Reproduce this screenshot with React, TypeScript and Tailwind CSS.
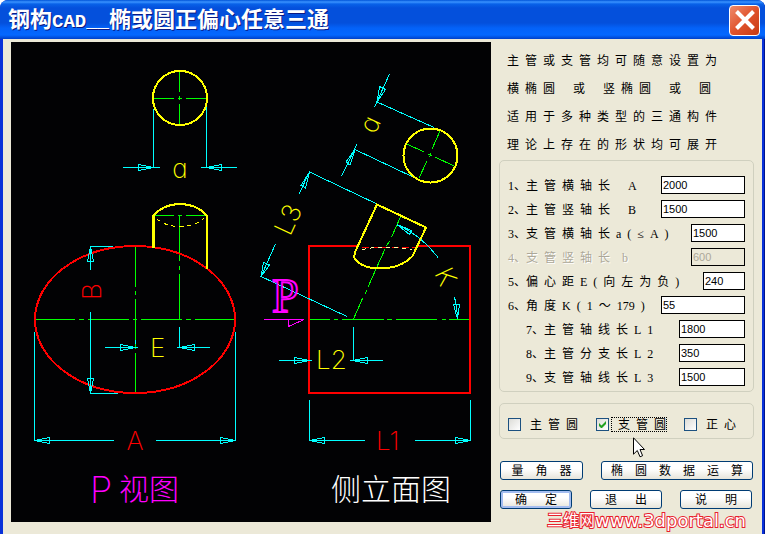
import React, { useState } from "react";

const cjk = "font-['Liberation_Serif','Noto_Sans_CJK_SC',serif]";
const cad = "font-['Inter','Noto_Sans_CJK_SC',sans-serif] font-extralight";

// Dialog labels are set wide: every blank is half an em.
const wide = (text: string) => text.replaceAll(" ", "\u2002");

type Field = {
  id: string;
  label: string;
  value: string;
  width: string;
  indent?: boolean;
  disabled?: boolean;
};

const fields: Field[] = [
  { id: "mainH", label: "1、主 管 横 轴 长   A", value: "2000", width: "w-[84px]" },
  { id: "mainV", label: "2、主 管 竖 轴 长   B", value: "1500", width: "w-[84px]" },
  { id: "branchH", label: "3、支 管 横 轴 长 a ( ≤ A )", value: "1500", width: "w-[54px]" },
  { id: "branchV", label: "4、支 管 竖 轴 长  b", value: "600", width: "w-[54px]", disabled: true },
  { id: "offset", label: "5、偏 心 距 E ( 向 左 为 负 )", value: "240", width: "w-[42px]" },
  { id: "angle", label: "6、角 度 K ( 1 ～ 179 )", value: "55", width: "w-[84px]" },
  { id: "l1", label: "7、主 管 轴 线 长 L 1", value: "1800", width: "w-[66px]", indent: true },
  { id: "l2", label: "8、主 管 分 支 长 L 2", value: "350", width: "w-[66px]", indent: true },
  { id: "l3", label: "9、支 管 轴 线 长 L 3", value: "1500", width: "w-[66px]", indent: true },
];

const notes = [
  "主 管 或 支 管 均 可 随 意 设 置 为",
  "横 椭 圆   或   竖 椭 圆   或   圆",
  "适 用 于 多 种 类 型 的 三 通 构 件",
  "理 论 上 存 在 的 形 状 均 可 展 开",
];

function Drawing() {
  return (
    <svg
      viewBox="11 42 480 480"
      className="h-[480px] w-[480px] shrink-0 bg-[#020204]"
      fill="none"
      shapeRendering="crispEdges"
      role="img"
      aria-label="三通视图"
    >
      {/* centre lines */}
      <g stroke="#00ff00">
        <path d="M154 98.5H174M178 98.5H182M186 98.5H206M179.5 71V92M179.5 96V100M179.5 104V124" />
        <path d="M154 215.5H174M178 215.5H182M186 215.5H206M179.5 216V261M179.5 266V270M179.5 274V319" />
        <path d="M135.5 247V287M135.5 291V295M135.5 299V349M135.5 353V392" />
        <path d="M36 319.5H75M79 319.5H84M88 319.5H129M133 319.5H137M141 319.5H182M186 319.5H191M195 319.5H234" />
        <path d="M310 319.5H330M334 319.5H338M342 319.5H384M387 319.5H392M396 319.5H437M442 319.5H446M449 319.5H469" />
        <path d="M440 131L432 149M431 153L429.5 157M427 161L419 178" />
        <path d="M407 144L424 152M428 154L432 156M435 157L454 166" />
        <path d="M400.5 217L391.5 237M389.5 241L386.5 246M385 249L368 287M366.5 290.5L365 294M362.5 298.5L353.5 319" />
      </g>

      {/* main pipe */}
      <g stroke="#ff0000" strokeWidth="2">
        <ellipse cx="135" cy="319.5" rx="100" ry="73.5" />
        <path d="M359 246H309V393H470V246H418" />
        <path d="M362 247.5H416" strokeWidth="1" strokeDasharray="7 3" />
      </g>

      {/* dimension lines */}
      <g stroke="#00ffff">
        <path d="M153.5 109V167.5M206.5 104V167.5M123 167.5H160M201 167.5H237" />
        <path d="M153 167.5L138.5 164.5V170.5ZM207 167.5L221.5 164.5V170.5Z" />
        <path d="M113 246.5H90.5V270M90.5 312V393.5H118" />
        <path d="M90.5 247L87.5 261.5H93.5ZM90.5 393L87.5 378.5H93.5Z" />
        <path d="M34.5 332V440.5H114M235.5 332V440.5H156" />
        <path d="M35 440.5L49.5 437.5V443.5ZM235 440.5L220.5 437.5V443.5Z" />
        <path d="M105 347.5H138M177 347.5H210M179.5 327V347M135.5 340V344" />
        <path d="M135 347.5L120.5 344.5V350.5ZM180 347.5L194.5 344.5V350.5Z" />
        <path d="M279 360.5H312M350 360.5H383M353.5 327V360" />
        <path d="M309 360.5L294.5 357.5V363.5ZM353 360.5L367.5 357.5V363.5Z" />
        <path d="M309.5 400V440.5H365M470.5 400V440.5H415" />
        <path d="M310 440.5L324.5 437.5V443.5ZM470 440.5L455.5 437.5V443.5Z" />
        <path d="M434 127.5L377 102M389.5 74L374.5 107M377 102L379.5 86.5L385.5 89.5Z" />
        <path d="M413 177L355 149.5M357 144L341.5 176.5M355 149.5L346 162L350 165Z" />
        <path d="M377 204L309.5 172L299 194M309.5 172L301 185.5L305.5 188Z" />
        <path d="M275.5 244L261 276.5L347 316.5M261 276.5L263.5 262.5L269.5 265Z" />
        <path d="M397 224.5A104.5 104.5 0 0 1 438 257.5M397 224.5L411.5 230.5L409.5 234.5Z" />
        <path d="M454.5 297Q457.5 308 457.5 319M457.5 319L453.5 304.5H459.5Z" />
      </g>

      {/* branch pipe */}
      <g stroke="#ffff00" strokeWidth="2">
        <circle cx="180" cy="98" r="27" />
        <circle cx="430.5" cy="155.5" r="27" />
        <path d="M153.5 248V215" strokeWidth="3" />
        <path d="M153.5 216Q163 204 180 204Q197 204 207 216V269" />
        <path d="M377 204.5L426 227.5L412.5 256C405 264 393 268.5 379 268.5C366 268.5 357 263 354.5 258Q354 254 356 250Z" />
        <path d="M157 219Q166 226.500 180 226.500Q195 226.500 204 218" strokeWidth="1" strokeDasharray="4 4" />
        <path d="M362 249.500L374 247.500H396L412 250" stroke="#ffffa0" strokeWidth="1" strokeDasharray="4 4" />
      </g>

      {/* view direction */}
      <path d="M264 319.5H304L288.500 326.500V320" stroke="#ff00ff" />
      <text x="272" y="312" className="font-['Liberation_Serif',serif] text-[48px]" stroke="#ff00ff" strokeWidth="2">P</text>

      <g className={cad} fontSize="26">
        <g fill="#ffff00">
          <text x="180" y="178" textAnchor="middle" className="[font-feature-settings:'cv11']">a</text>
          <text x="150" y="357">E</text>
          <text x="316" y="369">L2</text>
          <text transform="translate(375 135) rotate(-65)" className="[font-feature-settings:'cv11']">a</text>
          <text transform="translate(290 237) rotate(-65)">L3</text>
          <text transform="translate(434 273) rotate(65)">K</text>
        </g>
        <g fill="#ff0000">
          <text transform="translate(101 300) rotate(-90)">B</text>
          <text x="135" y="450" textAnchor="middle">A</text>
          <text x="376" y="450">L1</text>
        </g>
      </g>
      <g className={cad} fontSize="30">
        <text x="90" y="503" fill="#ff00ff">
          <tspan fontSize="36">P</tspan>
          <tspan x="119" y="500">视图</tspan>
        </text>
        <text x="331" y="500" fill="#ffffff">侧立面图</text>
      </g>
    </svg>
  );
}

function FieldRow({ field }: { field: Field }) {
  const [value, setValue] = useState(field.value);
  return (
    <div className="flex h-6 items-center justify-between">
      <label
        htmlFor={field.id}
        className={`pt-0.5 whitespace-nowrap ${field.indent ? "pl-[18px]" : ""} ${
          field.disabled ? "text-[#aca899] [text-shadow:1px_1px_0_#fff]" : ""
        }`}
      >
        {wide(field.label)}
      </label>
      <input
        id={field.id}
        value={value}
        disabled={field.disabled}
        onChange={(e) => setValue(e.target.value)}
        className={`h-[18px] border border-black bg-white pb-px pl-px font-['Liberation_Sans',sans-serif] text-[11px] text-black outline-none disabled:bg-[#ece9d8] disabled:text-[#aca899] ${field.width}`}
      />
    </div>
  );
}

function Check({ id, label, initial, focused }: { id: string; label: string; initial?: boolean; focused?: boolean }) {
  const [on, setOn] = useState(!!initial);
  return (
    <div className="relative flex w-[88px] shrink-0 items-center last-of-type:w-auto">
      <input
        id={id}
        type="checkbox"
        checked={on}
        onChange={() => setOn(!on)}
        className="size-[13px] shrink-0 appearance-none border border-[#1c5180] bg-linear-to-br from-[#dcdcd7] to-white"
      />
      {on && (
        <svg viewBox="0 0 13 13" className="pointer-events-none absolute left-0 size-[13px]" fill="#21a121">
          <path d="M3 5v3l2 2h1l4-4V3L5.500 7.500Z" />
        </svg>
      )}
      <label
        htmlFor={id}
        className={`ml-0.5 border border-dotted pt-px pl-1.5 leading-3 whitespace-nowrap ${focused ? "border-black" : "border-transparent"}`}
      >
        {wide(label)}
      </label>
    </div>
  );
}

function PushButton({ label, width, primary }: { label: string; width: string; primary?: boolean }) {
  return (
    <button
      type="button"
      className={`h-[19px] rounded-[3px] border border-[#003c74] bg-linear-to-b from-white from-40% to-[#e6e4da] leading-4 whitespace-nowrap ${width} ${
        primary ? "shadow-[inset_0_0_0_2px_#a4bdf0]" : ""
      }`}
    >
      {wide(label)}
    </button>
  );
}

export default function App() {
  return (
    <main className={`flex min-h-screen w-full flex-col rounded-t-lg bg-[#0831d9] text-[12px] text-black shadow-[inset_-1px_-1px_0_#00138c] ${cjk}`}>
      <header className="flex h-[39px] items-center justify-between rounded-t-lg bg-[linear-gradient(#0054d8_0,#3a93ff_2px,#0862e8_4px,#0450dc_8px,#0450dc_23px,#0462f8_28px,#0468ff_35px,#0040c8_39px)] pt-px pr-[5px] pl-2">
        <h1 className="flex items-baseline pt-0.5 text-[22px] leading-8 font-bold whitespace-nowrap text-white [text-shadow:1px_1px_0_#0a1883]">
          钢构<span className="font-['Liberation_Mono',monospace] text-[19px]">CAD__</span>椭或圆正偏心任意三通
        </h1>
        <button
          type="button"
          aria-label="关闭"
          className="flex size-[31px] items-center justify-center rounded-[4px] border border-white bg-linear-to-br from-[#ee8a6a] via-[#e0532c] to-[#c83a10]"
        >
          <svg viewBox="0 0 20 20" className="size-5" stroke="#fff" strokeWidth="4">
            <path d="M1.500 1.500L18.500 18.500M18.500 1.500L1.500 18.500" />
          </svg>
        </button>
      </header>

      <div className="mx-[3px] mb-[3px] flex grow items-start gap-2 bg-[#ece9d8] px-2 pt-[3px] pb-[9px]">
        <Drawing />
        <form className="min-w-0 flex-1" onSubmit={(e) => e.preventDefault()}>
          <div className="pt-[5px] pl-2 leading-7 whitespace-nowrap">
            {notes.map((n) => (
              <p key={n}>{wide(n)}</p>
            ))}
          </div>

          <div className="mt-px rounded-[5px] border border-[#d0d0bf] pt-3 pr-2 pb-0.5 pl-2">
            {fields.map((f) => (
              <FieldRow key={f.id} field={f} />
            ))}
          </div>

          <div className="relative mt-[11px] flex h-9 items-center rounded-[5px] border border-[#d0d0bf] pt-1.5 pl-2">
            <Check id="mainRound" label="主 管 圆" />
            <Check id="branchRound" label="支 管 圆" initial focused />
            <Check id="centred" label="正 心" />
            <svg viewBox="0 0 12 21" className="pointer-events-none absolute top-[33px] left-[133px] h-[21px] w-3" aria-hidden="true">
              <path d="M.5 .8V17.200L4.300 13.500L7 19.800L9.600 18.700L7 12.500H11.500Z" fill="#fff" stroke="#000" />
            </svg>
          </div>

          <div className="mt-[22px] flex gap-[18px] pl-px">
            <PushButton label="量  角  器" width="w-[83px]" />
            <PushButton label="椭  圆  数  据  运  算" width="w-[152px]" />
          </div>
          <div className="mt-2.5 flex gap-[18px] pl-px">
            <PushButton label="确   定" width="w-[72px]" primary />
            <PushButton label="退   出" width="w-[72px]" />
            <PushButton label="说   明" width="w-[72px]" />
          </div>
          <p className="mt-1 flex h-4 items-center justify-end pr-2 font-['DejaVu_Sans','Noto_Sans_CJK_SC',sans-serif] text-[18px] leading-4 whitespace-nowrap text-white [-webkit-text-stroke:2px_#e8202c] [paint-order:stroke_fill]">
            <span className="text-[16px]">三维网</span>www.3dportal.cn
          </p>
        </form>
      </div>
    </main>
  );
}
